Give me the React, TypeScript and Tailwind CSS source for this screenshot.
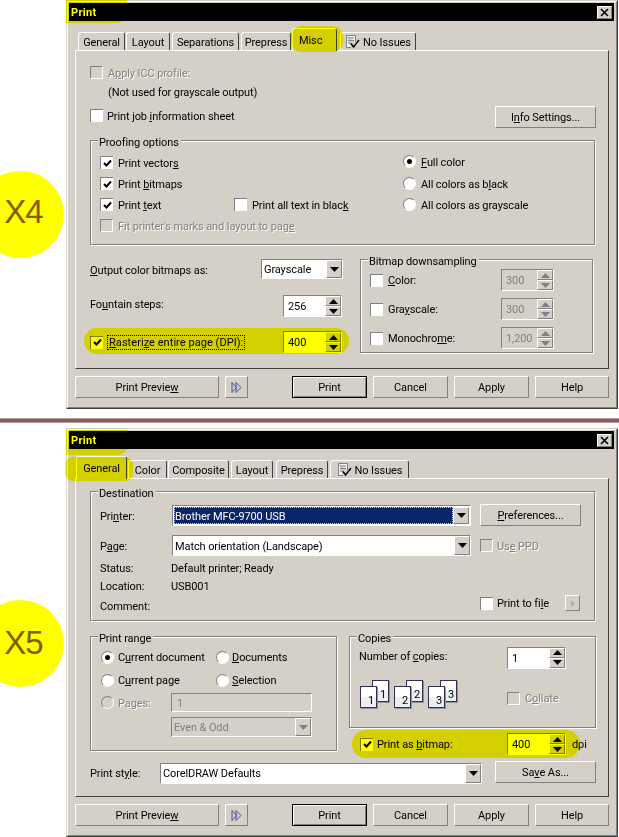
import type { ReactNode } from 'react'

const sunken = 'border border-t-[#808080] border-l-[#808080] border-r-white border-b-white'
const raised = 'border border-t-white border-l-white border-r-[#808080] border-b-[#808080]'
const muted = 'text-[#808080] [text-shadow:1px_1px_0_#fff]'

function Tri({ up, disabled }: { up?: boolean; disabled?: boolean }) {
  return (
    <svg width="9" height="5" viewBox="0 0 9 5" className="block">
      <path d={up ? 'M4.5 0 L9 5 L0 5 Z' : 'M0 0 L9 0 L4.5 5 Z'} fill={disabled ? '#808080' : '#000'} />
    </svg>
  )
}

function Check({ checked, disabled }: { checked?: boolean; disabled?: boolean }) {
  return (
    <div className={`flex h-[13px] w-[13px] shrink-0 items-center justify-center border-t border-l border-t-[#808080] border-l-[#808080] ${disabled ? 'border-r border-b border-r-white border-b-white' : 'bg-white'}`}>
      {checked && (
        <svg width="9" height="9" viewBox="0 0 9 9">
          <path d="M1 4 L3.5 6.5 L8 1.5" fill="none" stroke="#000" strokeWidth="2" />
        </svg>
      )}
    </div>
  )
}

function Radio({ checked, disabled }: { checked?: boolean; disabled?: boolean }) {
  return (
    <div className={`flex h-[13px] w-[13px] shrink-0 items-center justify-center rounded-full border border-t-[#808080] border-l-[#808080] border-r-white border-b-white ${disabled ? '' : 'bg-white'}`}>
      {checked && <div className="h-[5px] w-[5px] rounded-full bg-black" />}
    </div>
  )
}

function Btn({ children, className = '' }: { children: ReactNode; className?: string }) {
  return <div className={`flex h-[22px] items-center justify-center ${raised} ${className}`}>{children}</div>
}

function Select({ value, className = '', disabled, focused }: { value: string; className?: string; disabled?: boolean; focused?: boolean }) {
  return (
    <div className={`flex items-stretch ${sunken} ${disabled ? '' : 'bg-white'} ${focused ? 'border-t-[#404040] border-l-[#404040] p-px' : ''} ${className}`}>
      <div className={`flex flex-1 items-center overflow-hidden ${disabled ? 'text-[#808080]' : ''} ${focused ? 'border border-dotted border-[#e8d890] bg-[#0a246a] text-white' : 'pl-[2px]'}`}><span>{value}</span></div>
      <div className={`flex w-[16px] items-center justify-center bg-[#d4d0c8] ${raised}`}>
        <Tri disabled={disabled} />
      </div>
    </div>
  )
}

function Spin({ value, disabled, className = 'w-[59px]' }: { value: string; disabled?: boolean; className?: string }) {
  return (
    <div className={`flex h-[22px] items-stretch ${sunken} ${disabled ? 'text-[#808080]' : 'bg-white'} ${className}`}>
      <div className="flex flex-1 items-center pl-[4px]"><span>{value}</span></div>
      <div className="flex w-[16px] flex-col bg-[#d4d0c8]">
        <div className={`flex flex-1 items-center justify-center ${raised}`}><Tri up disabled={disabled} /></div>
        <div className={`flex flex-1 items-center justify-center ${raised}`}><Tri disabled={disabled} /></div>
      </div>
    </div>
  )
}

function Group({ label, className = '', children }: { label: string; className?: string; children?: ReactNode }) {
  return (
    <div className={`relative border border-[#808080] shadow-[1px_1px_0_#fff,inset_1px_1px_0_#fff] ${className}`}>
      <span className="absolute -top-[6px] left-[7px] bg-[#d4d0c8] pr-[2px] pl-px leading-[13px]">{label}</span>
      {children}
    </div>
  )
}

function IssueIcon() {
  return (
    <svg width="15" height="15" viewBox="0 0 15 15" className="mr-[3px] shrink-0">
      <path d="M1.5 1.5 H10.5 V8 M1.5 1.5 V13.5 H6" fill="#f4f4f0" stroke="#808080" />
      <path d="M3 4 H9 M3 6.5 H9 M3 9 H6" stroke="#808080" />
      <path d="M6 9.5 L8.5 13 L14 6" fill="none" stroke="#000" strokeWidth="1.5" />
    </svg>
  )
}

interface TabInfo {
  label: string
  cls: string
  selected?: boolean
  icon?: boolean
}

function Tabs({ tabs }: { tabs: TabInfo[] }) {
  return (
    <div className="flex h-[29px] items-end">
      {tabs.map((t) => (
        <div
          key={t.label}
          className={`flex items-center rounded-t-[3px] border-t border-l border-r border-t-white border-l-white border-r-[#404040] ${t.cls} ${t.selected ? 'relative z-10 -mb-px h-[23px] bg-[#d4d0c8]' : 'h-[18px]'}`}
        >
          {t.icon && <IssueIcon />}
          <span>{t.label}</span>
        </div>
      ))}
    </div>
  )
}

function BottomButtons() {
  return (
    <div className="mt-[7px] flex">
      <Btn className="w-[144px]"><span>Print Previe<u>w</u></span></Btn>
      <Btn className="ml-[6px] w-[23px]">
        <svg width="11" height="11" viewBox="0 0 11 11">
          <path d="M1 .5 L5.5 5.5 L1 10.5 Z M5 .5 L10 5.5 L5 10.5 Z" fill="#c8c8e8" stroke="#505080" />
        </svg>
      </Btn>
      <div className="ml-[44px] flex h-[22px] w-[75px] items-center justify-center border border-black shadow-[inset_1px_1px_0_#fff,inset_-1px_-1px_0_#808080]"><span>Print</span></div>
      <Btn className="ml-[6px] w-[75px]"><span>Cancel</span></Btn>
      <Btn className="ml-[6px] w-[75px]"><span>Apply</span></Btn>
      <Btn className="ml-[6px] w-[74px]"><span>Help</span></Btn>
    </div>
  )
}

function Dialog({ tabs, className = '', children }: { tabs: TabInfo[]; className?: string; children: ReactNode }) {
  return (
    <div className={`ml-[66px] h-[409px] w-[552px] border border-t-[#d4d0c8] border-l-[#d4d0c8] border-r-[#404040] border-b-[#404040] ${className}`}>
      <div className="h-full border border-t-white border-l-white border-r-[#808080] border-b-[#808080] bg-[#d4d0c8] pt-px pr-[2px] pl-px">
        <div className="flex h-[18px] items-center justify-between bg-black pr-[2px] pl-[2px]">
          <span className="font-bold tracking-[0.3px] text-white">Print</span>
          <div className={`flex h-[13px] w-[15px] items-center justify-center bg-[#d4d0c8] ${raised}`}>
            <svg width="9" height="9" viewBox="0 0 9 9">
              <path d="M1 1 L8 8 M8 1 L1 8" stroke="#000" strokeWidth="1.6" />
            </svg>
          </div>
        </div>
        <div className="pl-[6px]">
          <Tabs tabs={tabs} />
          <div className="h-[319px] w-[534px] border border-t-white border-l-white border-r-[#404040] border-b-[#404040]">{children}</div>
          <BottomButtons />
        </div>
      </div>
    </div>
  )
}

function PagesIcon() {
  const sets = [0, 34, 68]
  return (
    <svg width="100" height="30" viewBox="0 0 100 30" className="shrink-0">
      {sets.map((dx, i) => (
        <g key={dx} transform={`translate(${dx} 0)`} fontFamily="Roboto, sans-serif" fontSize="11" fill="#000">
          <rect x="13" y="1" width="17" height="22" fill="#9090a0" />
          <rect x="12.5" y=".5" width="16" height="21" fill="#fff" stroke="#303050" />
          <rect x="13" y="11" width="15" height="10" fill="#eeeef2" />
          <text x="20" y="18">{i + 1}</text>
          <rect x="1" y="7" width="17" height="22" fill="#9090a0" />
          <rect x=".5" y="6.5" width="16" height="21" fill="#fff" stroke="#303050" />
          <rect x="1" y="17" width="15" height="10" fill="#eeeef2" />
          <text x="8" y="24">{i + 1}</text>
        </g>
      ))}
    </svg>
  )
}

function MiscPage() {
  return (
    <div className="pl-[14px]">
      <div className={`mt-[15px] flex h-[13px] items-center gap-[5px] ${muted}`}>
        <Check disabled /> <span>A<u>p</u>ply ICC profile:</span>
      </div>
      <div className="mt-[6px] flex h-[14px] items-center pl-[18px]"><span>(Not used for grayscale output)</span></div>
      <div className="mt-[7px] flex w-[506px] items-start justify-between">
        <div className="mt-[3px] flex h-[13px] items-center gap-[4px]">
          <Check /> <span>Print job <u>i</u>nformation sheet</span>
        </div>
        <Btn className="w-[101px]"><span>I<u>n</u>fo Settings...</span></Btn>
      </div>
      <Group label="Proofing options" className="mt-[12px] h-[105px] w-[505px] pt-[11px] pl-[9px]">
        <div className="grid grid-cols-[303px_1fr] [&>div]:flex [&>div]:h-[21px] [&>div]:items-center [&>div]:gap-[5px]">
          <div><Check checked /> <span>Print vector<u>s</u></span></div>
          <div className="-translate-y-px"><Radio checked /> <span><u>F</u>ull color</span></div>
          <div><Check checked /> <span>Print <u>b</u>itmaps</span></div>
          <div><Radio /> <span>All colors as b<u>l</u>ack</span></div>
          <div>
            <div className="flex w-[129px] items-center gap-[5px]"><Check checked /> <span>Print <u>t</u>ext</span></div>
            <Check /> <span>Print all text in blac<u>k</u></span>
          </div>
          <div><Radio /> <span>All colors as <u>g</u>rayscale</span></div>
          <div className={muted}><Check disabled /> <span>Fit printer's marks and layout to pag<u>e</u></span></div>
        </div>
      </Group>
      <div className="mt-[14px] flex">
        <div className="w-[270px]">
          <div className="flex h-[20px] w-[253px] items-center justify-between">
            <span className="pt-[2px]"><u>O</u>utput color bitmaps as:</span>
            <Select value="Grayscale" className="h-[20px] w-[82px]" />
          </div>
          <div className="mt-[16px] flex w-[252px] items-center justify-between">
            <span className="pb-[4px]">Fo<u>u</u>ntain steps:</span>
            <Spin value="256" />
          </div>
          <div className="mt-[14px] flex w-[252px] items-center justify-between">
            <div className="flex items-center gap-[4px]">
              <Check checked />
              <div className="border border-dotted border-black px-px leading-[13px] tracking-[0.05px]"><u>R</u>asteri<u>z</u>e entire page (DPI):</div>
            </div>
            <Spin value="400" />
          </div>
        </div>
        <Group label="Bitmap downsampling" className="h-[94px] w-[233px] pt-[9px] pl-[9px]">
          <div className="flex flex-col gap-[7px]">
            <div className="flex items-center">
              <div className="flex w-[131px] items-center gap-[5px]"><Check /> <span><u>C</u>olor:</span></div>
              <Spin value="300" disabled className="w-[53px]" />
            </div>
            <div className="flex items-center">
              <div className="flex w-[131px] items-center gap-[5px]"><Check /> <span>Gra<u>y</u>scale:</span></div>
              <Spin value="300" disabled className="w-[53px]" />
            </div>
            <div className="flex items-center">
              <div className="flex w-[131px] items-center gap-[5px]"><Check /> <span>Monochro<u>m</u>e:</span></div>
              <Spin value="1,200" disabled className="w-[53px]" />
            </div>
          </div>
        </Group>
      </div>
    </div>
  )
}

function GeneralPage() {
  return (
    <div className="pl-[14px]">
      <Group label="Destination" className="mt-[12px] h-[130px] w-[505px] pt-[12px] pl-[9px]">
        <div className="flex h-[22px] items-center">
          <span className="w-[72px] pt-[2px]">Pri<u>n</u>ter:</span>
          <Select value="Brother MFC-9700 USB" focused className="mt-px h-[21px] w-[299px]" />
          <Btn className="ml-[9px] w-[101px]"><span><u>P</u>references...</span></Btn>
        </div>
        <div className="mt-[9px] flex h-[21px] items-center">
          <span className="w-[72px]">P<u>a</u>ge:</span>
          <Select value="Match orientation (Landscape)" className="h-[21px] w-[299px]" />
          <div className={`ml-[9px] flex items-center gap-[4px] ${muted}`}><Check disabled /> <span>Us<u>e</u> PPD</span></div>
        </div>
        <div className="mt-[5px] flex h-[14px] items-center"><span className="w-[71px]">Status:</span><span>Default printer; Ready</span></div>
        <div className="mt-[4px] flex h-[14px] items-center"><span className="w-[71px]">Location:</span><span>USB001</span></div>
        <div className="mt-[2px] flex h-[16px] items-center">
          <span className="w-[380px] pt-[6px]">Comment:</span>
          <Check />
          <span className="ml-[4px] w-[68px]">Print to fi<u>l</u>e</span>
          <div className={`flex h-[16px] w-[15px] items-center justify-center ${raised}`}>
            <svg width="4" height="7" viewBox="0 0 4 7"><path d="M0 0 L4 3.5 L0 7 Z" fill="#b0b0b0" /></svg>
          </div>
        </div>
      </Group>
      <div className="mt-[15px] flex">
        <Group label="Print range" className="h-[115px] w-[247px] pt-[10px] pl-[10px]">
          <div className="flex h-[20px] items-center">
            <div className="flex w-[115px] items-center gap-[4px]"><Radio checked /> <span>C<u>u</u>rrent document</span></div>
            <div className="flex items-center gap-[3px]"><Radio /> <span><u>D</u>ocuments</span></div>
          </div>
          <div className="mt-[3px] flex h-[20px] items-center">
            <div className="flex w-[115px] items-center gap-[4px]"><Radio /> <span>C<u>u</u>rrent page</span></div>
            <div className="flex items-center gap-[3px]"><Radio /> <span><u>S</u>election</span></div>
          </div>
          <div className="mt-[3px] flex h-[19px] items-center">
            <div className={`flex w-[70px] items-center gap-[4px] ${muted}`}><Radio disabled /> <span>Pa<u>g</u>es:</span></div>
            <div className={`flex h-[19px] w-[141px] items-center pl-[5px] text-[#808080] ${sunken}`}><span>1</span></div>
          </div>
          <Select value="Even & Odd" disabled className="mt-[5px] ml-[70px] h-[20px] w-[141px]" />
        </Group>
        <div className="ml-[12px] w-[247px]">
          <Group label="Copies" className="h-[92px] pt-[10px] pl-[9px]">
            <div className="flex h-[21px] items-center">
              <span className="w-[148px] pb-[4px]">Number of <u>c</u>opies:</span>
              <Spin value="1" className="w-[59px]" />
            </div>
            <div className="mt-[12px] flex h-[30px] items-center pl-px">
              <PagesIcon />
              <div className={`ml-[47px] flex translate-y-[3px] items-center gap-[5px] ${muted}`}><Check disabled /> <span>C<u>o</u>llate</span></div>
            </div>
          </Group>
          <div className="mt-[5px] flex h-[22px] items-center pl-[11px]">
            <div className="flex w-[147px] items-center gap-[4px]"><Check checked /> <span>Print as <u>b</u>itmap:</span></div>
            <Spin value="400" />
            <span className="ml-[6px]">dpi</span>
          </div>
        </div>
      </div>
      <div className="mt-[6px] flex h-[22px] items-center">
        <span className="w-[70px] pt-[2px]">Print st<u>y</u>le:</span>
        <Select value="CorelDRAW Defaults" className="mt-[2px] h-[21px] w-[322px]" />
        <Btn className="ml-[13px] w-[101px]"><span>Sa<u>v</u>e As...</span></Btn>
      </div>
    </div>
  )
}

const miscTabs: TabInfo[] = [
  { label: 'General', cls: 'ml-[3px] w-[47px] justify-center' },
  { label: 'Layout', cls: 'ml-px w-[44px] justify-center' },
  { label: 'Separations', cls: 'ml-[2px] w-[67px] justify-center' },
  { label: 'Prepress', cls: 'ml-[2px] w-[50px] justify-center' },
  { label: 'Misc', cls: 'ml-px w-[45px] pl-[6px]', selected: true },
  { label: 'No Issues', cls: 'ml-[3px] w-[76px] justify-center', icon: true },
]

const generalTabs: TabInfo[] = [
  { label: 'General', cls: 'ml-px w-[51px] justify-center', selected: true },
  { label: 'Color', cls: 'ml-px w-[39px] justify-center' },
  { label: 'Composite', cls: 'ml-px w-[61px] justify-center' },
  { label: 'Layout', cls: 'ml-[2px] w-[42px] justify-center' },
  { label: 'Prepress', cls: 'ml-[3px] w-[52px] justify-center' },
  { label: 'No Issues', cls: 'ml-[2px] w-[79px] justify-center', icon: true },
]

export default function App() {
  return (
    <div className="relative h-[837px] w-[619px] overflow-hidden bg-white font-['Roboto',sans-serif] text-[11px] leading-[14px] tracking-[-0.1px] text-black [&_span]:translate-y-px">
      <Dialog tabs={miscTabs}>
        <MiscPage />
      </Dialog>
      <div className="mt-[9px] h-[5px] border-y border-[#b89a9a] bg-[#8a5a5a]" />
      <Dialog tabs={generalTabs} className="mt-[5px]">
        <GeneralPage />
      </Dialog>

      {/* yellow marker strokes, multiplied over the dialogs */}
      <div className="absolute top-0 left-[66px] h-[23px] w-[61px] rounded-br-[10px] bg-[#ffff00] mix-blend-multiply" />
      <div className="absolute top-[26px] left-[291px] z-20 h-[26px] w-[52px] rounded-[10px] bg-[#ffff00] mix-blend-multiply" />
      <div className="absolute top-[328px] left-[84px] h-[26px] w-[265px] rounded-full bg-[#ffff00] mix-blend-multiply" />
      <div className="absolute top-[430px] left-[66px] h-[25px] w-[62px] rounded-br-[10px] bg-[#ffff00] mix-blend-multiply" />
      <div className="absolute top-[457px] left-[65px] z-20 h-[24px] w-[68px] rounded-[8px] bg-[#ffff00] mix-blend-multiply" />
      <div className="absolute top-[730px] left-[352px] h-[28px] w-[228px] rounded-full bg-[#ffff00] mix-blend-multiply" />

      <div className="absolute top-[171px] -left-[23px] flex h-[87px] w-[87px] items-center justify-center rounded-full bg-[#ffff00] pb-[5px] pl-[6px] font-['Liberation_Sans',sans-serif] text-[33px] tracking-[-1px] text-[#855c00]">X4</div>
      <div className="absolute top-[600px] -left-[23px] flex h-[87px] w-[87px] items-center justify-center rounded-full bg-[#ffff00] pb-px pl-[6px] font-['Liberation_Sans',sans-serif] text-[33px] tracking-[-1px] text-[#855c00]">X5</div>
    </div>
  )
}
